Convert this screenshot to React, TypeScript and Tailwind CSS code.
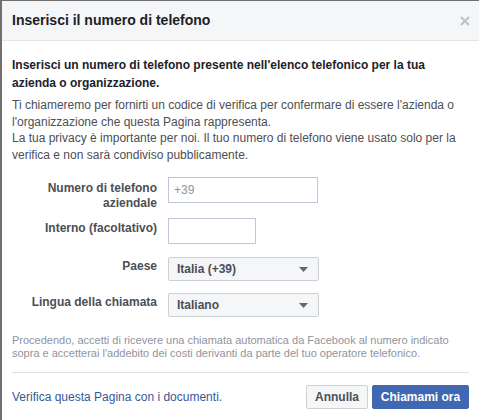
import React from 'react';

const font = { fontFamily: '"Liberation Sans", Arial, sans-serif' };

function Caret() {
  return (
    <svg width="9" height="5" viewBox="0 0 9 5" className="shrink-0">
      <path d="M0 0h9L4.5 5z" fill="#606770" />
    </svg>
  );
}

function SelectBox({ value }: { value: string }) {
  return (
    <div className="w-[151px] h-[24px] bg-[#f5f6f7] border border-[#ccd0d5] rounded-[2px] flex items-center justify-between pl-[8px] pr-[10px] text-[12px] font-bold text-[#4b4f56]">
      <span>{value}</span>
      <Caret />
    </div>
  );
}

export default function App() {
  return (
    <div
      style={font}
      className="w-[479px] h-[420px] bg-white border-l-2 border-t border-[#707070] overflow-hidden text-[#1d2129]"
    >
      {/* Header */}
      <div className="h-[40px] bg-[#f5f6f7] border-b border-[#e5e5e5] flex items-center justify-between pl-[10px] pr-[9px]">
        <h2 className="text-[14px] font-bold text-[#1d2129]">Inserisci il numero di telefono</h2>
        <svg width="10" height="10" viewBox="0 0 10 10">
          <path d="M1 1l8 8M9 1l-8 8" stroke="#bec3c9" strokeWidth="2" />
        </svg>
      </div>

      {/* Body */}
      <div className="px-[10px] pt-[15px]">
        <p className="text-[12px] font-bold leading-[18px]">
          Inserisci un numero di telefono presente nell'elenco telefonico per la tua azienda o organizzazione.
        </p>
        <p className="mt-[5px] text-[12px] leading-[16.5px] text-[#4b4f56]">
          Ti chiameremo per fornirti un codice di verifica per confermare di essere l'azienda o l'organizzazione che
          questa Pagina rappresenta.
          <br />
          La tua privacy è importante per noi. Il tuo numero di telefono viene usato solo per la verifica e non sarà
          condiviso pubblicamente.
        </p>

        {/* Form */}
        <div className="mt-[14px] flex flex-col text-[12px] font-bold text-[#4b4f56]">
          <div className="flex items-start gap-[11px]">
            <label className="w-[145px] text-right leading-[15px] pt-[4px]">
              Numero di telefono
              <br />
              aziendale
            </label>
            <div className="w-[150px] h-[26px] border border-[#bdc7d8] flex items-center px-[5px] text-[12px] font-normal text-[#90949c]">
              +39
            </div>
          </div>
          <div className="mt-[7px] flex items-start gap-[11px]">
            <label className="w-[145px] text-right leading-[15px] pt-[3px]">Interno (facoltativo)</label>
            <div className="w-[88px] h-[26px] border border-[#bdc7d8]" />
          </div>
          <div className="mt-[13px] flex items-start gap-[11px]">
            <label className="w-[145px] text-right leading-[15px] pt-[2px]">Paese</label>
            <SelectBox value="Italia (+39)" />
          </div>
          <div className="mt-[12px] flex items-start gap-[11px]">
            <label className="w-[145px] text-right leading-[15px] pt-[2px]">Lingua della chiamata</label>
            <SelectBox value="Italiano" />
          </div>
        </div>

        <p className="mt-[17px] text-[11px] leading-[13px] text-[#90949c]">
          Procedendo, accetti di ricevere una chiamata automatica da Facebook al numero indicato sopra e accetterai
          l'addebito dei costi derivanti da parte del tuo operatore telefonico.
        </p>

        {/* Footer */}
        <div className="mt-[12px] border-t border-[#dddfe2] pt-[12px] flex items-center justify-between">
          <a className="text-[12px] text-[#365899]">Verifica questa Pagina con i documenti.</a>
          <div className="flex gap-[4px]">
            <button className="h-[24px] px-[8px] w-[62px] bg-[#f5f6f7] border border-[#ced0d4] rounded-[2px] text-[12px] font-bold text-[#4b4f56]">
              Annulla
            </button>
            <button className="h-[24px] w-[97px] bg-[#4267b2] border border-[#4267b2] rounded-[2px] text-[12px] font-bold text-white">
              Chiamami ora
            </button>
          </div>
        </div>
      </div>
    </div>
  );
}
